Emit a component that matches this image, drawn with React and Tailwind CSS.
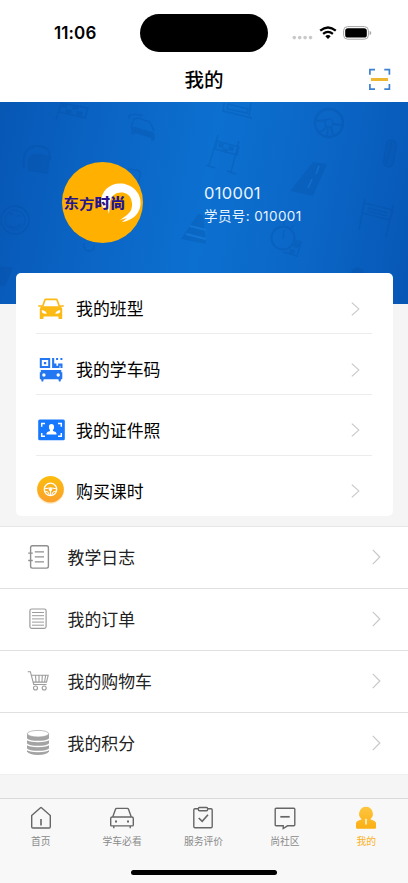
import React from "react";

const CarIcon = () => (
  <svg width="28" height="22" viewBox="0 0 28 22" fill="none">
    <path d="M5.6 8.5 7.8 2.2Q8.1 1.3 9 1.3h10q.9 0 1.2.9l2.2 6.3" stroke="#fcba14" strokeWidth="1.7" />
    <path
      fill="#fcba14"
      fillRule="evenodd"
      d="M1.2 7.2h3.6l.5 1h17.4l.5-1h3.6v1.6h-2.7l1.1 2v9.4q0 .9-.9.9h-1.9q-.9 0-.9-.9v-1.7h-15v1.7q0 .9-.9.9H3.7q-.9 0-.9-.9v-9.4l1.1-2H1.2ZM4.8 12v2.2q2.2 2 5 1.5-1-3-5-3.7Zm18.4 0q-4 .7-5 3.7 2.8.5 5-1.5Z"
    />
  </svg>
);

const CodeIcon = () => (
  <svg width="24" height="25" viewBox="0 0 24 25" fill="#2477f2">
    <path fillRule="evenodd" d="M.8 1h10.4v10H.8Zm2 2v6h6.4V3Z" />
    <path d="M4.9 4.9h2.3v2.3H4.9ZM13.1 1h2.1v5.5h2.2v2.2h1.7V6.5h4.4V11h-2.1V8.7h-.8V11h-7.5ZM17.1 1h2v2h-2ZM21.4 1h2v2h-2Z" />
    <path
      fillRule="evenodd"
      d="M1.8 13h20.5v2.2h1v6.2q0 .9-.9.9h-.4l-.5 2.2h-1.6l-.5-2.2H4.7l-.5 2.2H2.6l-.5-2.2h-.4q-.9 0-.9-.9v-6.2h1ZM4.9 16.3a1.7 1.7 0 1 0 0 3.4 1.7 1.7 0 0 0 0-3.4Zm14.3 0a1.7 1.7 0 1 0 0 3.4 1.7 1.7 0 0 0 0-3.4Z"
    />
  </svg>
);

const PhotoIcon = () => (
  <svg width="27" height="22" viewBox="0 0 27 22" fill="none">
    <rect x=".2" y=".5" width="26.6" height="20.8" rx="1.5" fill="#1677ff" />
    <path d="M7 4.500H3.700v3.300M20 4.500h3.300v3.300M7 17.300H3.700V14M20 17.300h3.300V14" stroke="#fff" strokeWidth="1.5" />
    <path
      fill="#fff"
      d="M13.5 5q2.600 0 2.600 2.900 0 2-1.100 3v1q3.500 1 3.500 2.400v1.200h-10v-1.200q0-1.400 3.500-2.400v-1q-1.100-1-1.100-3Q10.900 5 13.500 5Z"
    />
  </svg>
);

const WheelIcon = () => (
  <svg width="30" height="32" viewBox="0 0 30 32" fill="none">
    <defs>
      <linearGradient id="wheel" x1="0" y1="0" x2="0" y2="1">
        <stop offset="0" stopColor="#fbbd0d" />
        <stop offset="1" stopColor="#fba02c" />
      </linearGradient>
    </defs>
    <circle cx="14.5" cy="15.5" r="13.6" fill="#fdebc8" />
    <circle cx="14.5" cy="14.2" r="13.3" fill="url(#wheel)" />
    <circle cx="14.5" cy="14.4" r="6.2" stroke="#fff" strokeWidth="1.3" />
    <path d="M8.700 13.800q5.800-2 11.600 0M9 16.100q3.500-.1 4.200 3.600M20 16.100q-3.500-.1-4.200 3.600" stroke="#fff" strokeWidth="1" />
    <circle cx="14.5" cy="14.5" r="1.7" fill="#fff" />
    <path d="M14.500 15.500v5" stroke="#fff" strokeWidth="1.2" />
  </svg>
);

const LogIcon = () => (
  <svg width="24" height="26" viewBox="0 0 24 26" fill="none" stroke="#8f8f8f" strokeWidth="1.4">
    <rect x="4.6" y="1.7" width="17.8" height="22.4" rx="1.8" />
    <path d="M2.200 9.100h4.600M2.200 16.500h4.600M8.800 7.900h9.200M8.800 12.900h9.200M8.800 17.900h9.200" />
  </svg>
);

const OrderIcon = () => (
  <svg width="24" height="24" viewBox="0 0 24 24" fill="none" stroke="#9c9c9c">
    <rect x="3.9" y="2" width="16.2" height="19.4" rx="1.8" strokeWidth="1.2" />
    <path d="M6 5.500h12M6 8.700h12M6 11.900h12M6 15.100h12M6 18.200h12" strokeWidth="1" />
  </svg>
);

const CartIcon = () => (
  <svg width="24" height="22" viewBox="0 0 24 22" fill="none" stroke="#9c9c9c" strokeWidth="1.1">
    <path d="M1.700 1.700h2.700L7.700 14.500h12.800M5.300 5.300h16.900l-1.700 6.800H7.200M9.500 5.500l.5 6.500M13 5.500v6.500M16.300 5.500 16 12M19.600 5.500l-1 6.500" />
    <circle cx="9.5" cy="18" r="2" />
    <circle cx="18.2" cy="18" r="2" />
  </svg>
);

const CoinsIcon = () => (
  <svg width="24" height="27" viewBox="0 0 24 27" fill="#a3a3a3">
    <path d="M1 4.600v18q2 3.400 11 3.400t11-3.400v-18Z" />
    <ellipse cx="12" cy="4.7" rx="10.7" ry="3.3" fill="#fff" stroke="#a3a3a3" strokeWidth=".7" />
    <path
      d="M.6 10q2.400 2.500 11.400 2.500T23.400 10M.6 15q2.400 2.500 11.400 2.500T23.400 15M.6 20q2.400 2.500 11.400 2.500T23.400 20"
      fill="none"
      stroke="#fff"
      strokeWidth="1.3"
    />
  </svg>
);

const HomeTabIcon = () => (
  <svg width="24" height="24" viewBox="0 0 24 24" fill="none" stroke="#666" strokeWidth="1.4">
    <path d="M2.700 9.600 11.500 1.700q.5-.4 1 0l8.800 7.900v11.200q0 1.200-1.200 1.200H3.900q-1.200 0-1.200-1.200Z" />
    <path d="M12 13v6.500" strokeWidth="1.6" />
  </svg>
);

const CarTabIcon = () => (
  <svg width="26" height="24" viewBox="0 0 26 24" fill="none" stroke="#666" strokeWidth="1.4">
    <path d="M3.700 11 6.500 3.200Q6.800 2.400 7.700 2.400h10.600q.9 0 1.200.8L22.300 11M3.200 11h19.600q1.500 0 1.500 1.500v6.400q0 1-1 1H2.700q-1 0-1-1v-6.400Q1.700 11 3.200 11ZM4.800 20v2.300M21.200 20v2.300" />
    <path d="M6 15.500h2M18 15.500h2" strokeWidth="2" />
  </svg>
);

const ReviewTabIcon = () => (
  <svg width="24" height="24" viewBox="0 0 24 24" fill="none" stroke="#666" strokeWidth="1.4">
    <path d="M7.300 2.700H4q-1.200 0-1.200 1.200v16.700q0 1.200 1.200 1.200h16q1.200 0 1.200-1.200V3.900q0-1.200-1.200-1.200h-3.300" />
    <rect x="7.4" y="1.5" width="9.2" height="3.2" rx="1" />
    <path d="m7.700 12 3.500 3.300 5.800-6.500" strokeWidth="1.6" />
  </svg>
);

const CommunityTabIcon = () => (
  <svg width="24" height="24" viewBox="0 0 24 24" fill="none" stroke="#666" strokeWidth="1.4">
    <path d="M3.200 2.200h17.600q1 0 1 1v15.600q0 1-1 1h-6.300L10.200 22.500v-2.700h-7q-1 0-1-1V3.200q0-1 1-1Z" />
    <path d="M7.300 10.800h9.400" strokeWidth="1.7" />
  </svg>
);

const MineTabIcon = () => (
  <svg width="24" height="24" viewBox="0 0 24 24">
    <defs>
      <linearGradient id="mine" x1="0" y1="0" x2="0" y2="1">
        <stop offset="0" stopColor="#fdc53f" />
        <stop offset="1" stopColor="#fbaf14" />
      </linearGradient>
    </defs>
    <path
      fill="url(#mine)"
      d="M12 .8a7 7 0 0 1 4.300 12.400l4.200 1.800q1.500.7 1.500 2.300v4.200q0 1.200-1.200 1.200H3.200Q2 22.700 2 21.500v-4.200q0-1.600 1.500-2.300l4.200-1.800A7 7 0 0 1 12 .8Z"
    />
    <path d="M12 12.800v5.600" stroke="#fff8e5" strokeWidth="1.5" />
  </svg>
);

const Chevron = ({ size }) => (
  <svg width="9" height={size} viewBox="0 0 9 16" preserveAspectRatio="none" fill="none">
    <path d="m.8.800 7 7.200-7 7.200" stroke="#c8c8c8" strokeWidth="1.2" />
  </svg>
);

const cardItems = [
  { label: "我的班型", icon: <CarIcon /> },
  { label: "我的学车码", icon: <CodeIcon /> },
  { label: "我的证件照", icon: <PhotoIcon /> },
  { label: "购买课时", icon: <WheelIcon /> },
];

const listItems = [
  { label: "教学日志", icon: <LogIcon /> },
  { label: "我的订单", icon: <OrderIcon /> },
  { label: "我的购物车", icon: <CartIcon /> },
  { label: "我的积分", icon: <CoinsIcon /> },
];

const tabs = [
  { label: "首页", icon: <HomeTabIcon /> },
  { label: "学车必看", icon: <CarTabIcon /> },
  { label: "服务评价", icon: <ReviewTabIcon /> },
  { label: "尚社区", icon: <CommunityTabIcon /> },
  { label: "我的", icon: <MineTabIcon />, active: true },
];

const StatusBar = () => (
  <div className="flex h-[57px] items-start pt-[14px]">
    <p className="w-[140px] pt-[7px] pl-[54px] text-[17px] leading-6 font-semibold tracking-[0.1px]">11:06</p>
    <div className="h-[37.5px] w-[128px] rounded-full bg-black" />
    <div className="flex items-center gap-[6px] pt-[11px] pl-[24px]">
      <svg width="21" height="16" viewBox="0 0 21 16" fill="#c9c9c9">
        <circle cx="2.3" cy="12.6" r="1.8" />
        <circle cx="7.7" cy="12.6" r="1.8" />
        <circle cx="13.1" cy="12.6" r="1.8" />
        <circle cx="18.5" cy="12.6" r="1.8" />
      </svg>
      <svg width="18" height="14" viewBox="0 0 18 14" fill="none" stroke="#000">
        <path d="M1.200 4.700q7.800-6.400 15.600 0" strokeWidth="2.3" />
        <path d="M4.100 7.900q4.900-4 9.800 0" strokeWidth="2.2" />
        <path d="M6.300 10.200q2.700-2.200 5.400 0L9 13Z" fill="#000" stroke="none" />
      </svg>
      <svg width="29" height="14" viewBox="0 0 29 14">
        <rect x=".6" y=".6" width="24.8" height="12.6" rx="4" fill="none" stroke="#a5a5a5" />
        <rect x="2.2" y="2.2" width="21.6" height="9.4" rx="2.6" />
        <path d="M26.600 4.800q1.700.8 1.700 2.200t-1.700 2.200Z" fill="#a5a5a5" />
      </svg>
    </div>
  </div>
);

const TitleBar = () => (
  <div className="grid h-[44.5px] grid-cols-[1fr_auto_1fr] items-center">
    <span />
    <h1 className="pt-[1.5px] text-[19.5px] leading-6 font-medium">我的</h1>
    <svg className="mr-[17px] justify-self-end" width="23" height="23" viewBox="0 0 23 23" fill="none">
      <path d="M1.900 6.700V1.600H7M16.300 1.600h5.100v5.100M1.900 16.100v5.100H7M16.300 21.200h5.100v-5.100" stroke="#3d80d2" strokeWidth="1.7" />
      <path d="M3 11.500h17" stroke="#efb630" strokeWidth="3" />
    </svg>
  </div>
);

// faint driving-school doodles on the banner
const BannerPattern = () => (
  <svg className="absolute inset-0" width="408" height="202" viewBox="0 0 408 202" fill="none" stroke="#04489b" strokeWidth="1.5" opacity=".22">
    <path d="m61 0-5 18M61 1l27 5-3 10-26-6Z" />
    <path d="m62 1 6 1-1 4-6-1ZM73 3l6 1-1 4-6-1ZM66 7l6 1-1 4-6-1ZM77 9l6 1-1 4-6-1Z" fill="#04489b" stroke="none" />
    <path d="m131 25 3-8 4-1 12 4 4 9M128 15q5-5 15-1M130 17q-3-2 0-4l6-1" />
    <path d="m131 24 22 6 2 3-1 6-3-1v-2l-16-5-1 2-3-1Z" fill="#04489b" stroke="none" />
    <path d="M24 66q-3-20 12-22 15-1 14 14" strokeWidth="2" />
    <path d="M28 58q3-8 14-6l8 2-2 18-20-3Z" fill="#04489b" stroke="none" />
    <circle cx="15" cy="118" r="14" />
    <circle cx="15" cy="118" r="10" strokeWidth="1" />
    <path d="M9 112h4M17 114h4M9 124q6 4 12-2" />
    <path d="m224 1-1 9M251 1l-2 13M223 9l29 7M228 2l20 5-1 4-20-4Z" />
    <path d="m218 33-9 30M239 39l-8 31M217 39l22 6-2 8-22-6ZM206 63l9 3M227 69l9 3" />
    <path d="m219 41 5 1-1 4-5-1ZM229 44l5 1-1 4-5-1ZM223 46l5 1-1 4-5-1Z" fill="#04489b" stroke="none" />
    <circle cx="329" cy="21" r="14" strokeWidth="2.5" />
    <circle cx="329" cy="21" r="4" />
    <path d="m316 19 10-1M342 23l-10-1M328 25l-1 9M331 25l2 8M319 30q5-1 7-6" strokeWidth="2" />
    <path d="m313 60 14 2-14 32-23-5Z" fill="#04489b" stroke="none" />
    <path d="m319 64-3 8M312 77l-4 9" stroke="#2f8fe8" />
    <rect x="385" y="38" width="10" height="27" rx="5" transform="rotate(10 390 51)" fill="#04489b" fillOpacity=".5" />
    <path d="m391 42-1 5M389 50l-1 4M387 57l-1 4" strokeWidth="3" strokeLinecap="round" />
    <path d="m365 97-6 31M393 103l-7 32M364 101l29 7-3 10-28-7Z" />
    <path d="m368 106 20 5M367 109l20 5" />
    <circle cx="283" cy="136" r="11.5" strokeWidth="2" />
    <path d="m284 128-1 9M284 123v-4M291 126l3-3M294 138l7 2-4 14-14-4" />
    <path d="m295 140 5 1-2 5-5-1ZM290 147l5 1-1 4-5-1Z" fill="#04489b" stroke="none" />
    <path d="m198 112 5 1 3 29-25-5Z" fill="#04489b" stroke="none" />
    <path d="m190 124 16 4M186 132l20 5" stroke="#2f8fe8" strokeWidth="2" />
    <path d="m352 168 4-3 7 2 3 6h-16ZM0 164l13 2-8 18H0Z" fill="#04489b" stroke="none" />
    <path d="M84 141q-1 8 5 8t5-6M128 67l9 1q4 1 3 5l-2 8" />
  </svg>
);

const Avatar = () => (
  <div className="relative flex h-[81px] w-[81px] items-center overflow-hidden rounded-full bg-[#ffb000]">
    <svg className="absolute inset-0" width="81" height="81" viewBox="0 0 81 81">
      <path
        fill="#fff"
        d="M39 40C39 28 49 20.500 60 21.500c12 1.500 20 11 18.500 22C77 53 69 59 60 60l5-4-7 2 7-5q6-5 5-12-1-9-9-10.500Q50 29.500 48 40l-1 12-2-7-4 1Z"
      />
    </svg>
    <p className="relative mt-[4px] flex scale-y-[.88] pl-[2px] text-[15.5px] leading-4 font-bold whitespace-nowrap text-[#26158c]">
      <span>东</span>
      <span className="pt-[1px]">方</span>
      <span className="font-black">时</span>
      <span className="font-black">尚</span>
    </p>
  </div>
);

const App = () => {
  return (
    <div className="flex h-[883px] w-[408px] flex-col overflow-hidden bg-[#f5f5f5] font-['Inter','Noto_Sans_CJK_SC',sans-serif] text-black">
      <div className="bg-white">
        <StatusBar />
        <TitleBar />
      </div>

      {/* Profile banner */}
      <div className="relative h-[202px] shrink-0 bg-[linear-gradient(100deg,#0757b5_0%,#0b66c6_28%,#0c70d0_50%,#0b66c6_75%,#0757b5_100%)]">
        <BannerPattern />
        <div className="relative flex items-start pt-[60.5px] pl-[61.5px]">
          <Avatar />
          <div className="pt-[19px] pl-[61.5px] text-[#e9f4ff]">
            <p className="text-[16.5px] leading-[24px] tracking-[0.3px]">010001</p>
            <p className="text-[13.5px] leading-[22px] tracking-[0.4px]">学员号: 010001</p>
          </div>
        </div>
      </div>

      {/* Course card */}
      <div className="relative mx-[15.5px] -mt-[30.5px] h-[243px] shrink-0 rounded-[5px] bg-white px-[20.5px] pt-[0.5px]">
        {cardItems.map((item) => (
          <div
            key={item.label}
            className="flex h-[60.7px] items-center border-b border-[#ececec] pt-[11px] pr-[12.5px] last:border-b-0">
            <div className="flex w-[30px] justify-center">{item.icon}</div>
            <p className="flex-1 pt-[1px] pl-[10px] text-[16.9px] leading-6">{item.label}</p>
            <Chevron size={14} />
          </div>
        ))}
      </div>

      {/* Other entries */}
      <div className="mt-[9.5px] shrink-0 border-t border-[#e6e6e6] bg-white">
        {listItems.map((item) => (
          <div
            key={item.label}
            className="flex h-[62px] items-center border-b border-[#e0e0e0] pr-[27px] pb-[1px] pl-[26px] last:border-[#f0f0f0]">
            <div className="flex w-[24px] justify-center">{item.icon}</div>
            <p className="flex-1 pt-[2px] pl-[17.5px] text-[16.9px] leading-6 text-[#222]">{item.label}</p>
            <Chevron size={16} />
          </div>
        ))}
      </div>

      {/* Tab bar */}
      <div className="mt-auto h-[85px] shrink-0 border-t border-[#d9d9d9] bg-[#f8f8f8]">
        <div className="grid grid-cols-5 pt-[7px] pr-[1px]">
          {tabs.map((tab) => (
            <div key={tab.label} className="flex flex-col items-center">
              {tab.icon}
              <p
                className={
                  tab.active
                    ? "pt-[3.5px] text-[9.8px] leading-4 text-[#f9b21d]"
                    : "pt-[3.5px] text-[9.8px] leading-4 text-[#8a8a8a]"
                }>
                {tab.label}
              </p>
            </div>
          ))}
        </div>
        <div className="mx-auto mt-[20.5px] h-[5px] w-[146px] rounded-full bg-black" />
      </div>
    </div>
  );
};

export default App;
